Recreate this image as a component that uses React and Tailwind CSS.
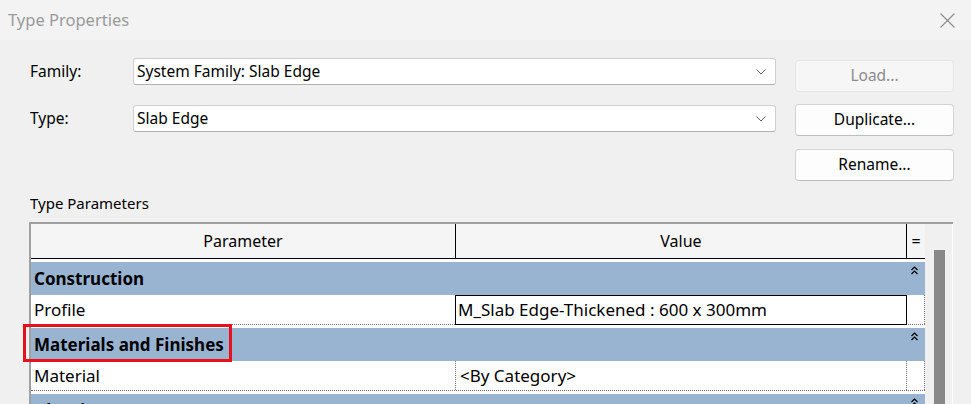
import React from "react";

const font = "font-['Noto_Sans',sans-serif]";

const Chevron = () => (
  <svg width="10" height="6" viewBox="0 0 10 6" className="text-[#606060]">
    <path d="M0.5 0.5 L5 5 L9.5 0.5" fill="none" stroke="currentColor" strokeWidth="1" />
  </svg>
);

const Collapse = () => (
  <svg width="7" height="9" viewBox="0 0 7 9">
    <path d="M0.5 4 L3.5 1 L6.5 4 M0.5 8 L3.5 5 L6.5 8" fill="none" stroke="#000" strokeWidth="1.2" />
  </svg>
);

const Combo = ({ value }) => (
  <div className="w-[643px] h-[27px] bg-white border border-[#cfcfcf] border-b-[#b0b0b0] rounded-[3px] flex items-center justify-between pl-[3px] pr-[9px]">
    <span className="text-[15.5px] text-black">{value}</span>
    <Chevron />
  </div>
);

const Button = ({ children, disabled }) => (
  <button
    className={
      disabled
        ? "w-[159px] h-[32px] rounded-[4px] border border-[#e5e5e5] bg-[#f6f6f6] text-[15.5px] text-[#8a8a8a]"
        : "w-[159px] h-[32px] rounded-[4px] border border-[#d3d3d3] border-b-[#bdbdbd] bg-[#fdfdfd] text-[15.5px] text-black"
    }
  >
    {children}
  </button>
);

const Group = ({ title }) => (
  <div className="bg-white pt-[3px]">
    <div className="h-[33px] bg-[#99b4d1] flex items-center justify-between pl-[3px] pr-[7px]">
      <span className="font-bold text-[17px] text-black">{title}</span>
      <div className="self-start mt-[4px]">
        <Collapse />
      </div>
    </div>
  </div>
);

export default function App() {
  return (
    <div className={`relative w-[971px] h-[404px] overflow-hidden bg-[#f0f0f0] ${font}`}>
      {/* title bar */}
      <div className="h-[40px] bg-[#f3f3f3] flex items-center justify-between pl-[8px] pr-[16px]">
        <span className="text-[16.5px] text-[#9a9a9a]">Type Properties</span>
        <svg width="15" height="15" viewBox="0 0 15 15">
          <path d="M0.5 0.5 L14.5 14.5 M14.5 0.5 L0.5 14.5" stroke="#8a8a8a" strokeWidth="1.1" />
        </svg>
      </div>

      {/* family / type selectors and buttons */}
      <div className="flex h-[141px]">
        <div className="flex flex-col pt-[18px] pl-[30px] gap-[20px]">
          <div className="flex items-center">
            <span className="w-[103px] text-[15.5px] text-black">Family:</span>
            <Combo value="System Family: Slab Edge" />
          </div>
          <div className="flex items-center">
            <span className="w-[103px] text-[15.5px] text-black">Type:</span>
            <Combo value="Slab Edge" />
          </div>
        </div>
        <div className="flex flex-col pt-[20px] ml-[19px]">
          <Button disabled>Load...</Button>
          <div className="mt-[12px]">
            <Button>Duplicate...</Button>
          </div>
          <div className="mt-[13px]">
            <Button>Rename...</Button>
          </div>
        </div>
      </div>

      <div className="mt-[11px] h-[22px] pl-[30px] flex items-center text-[15px] text-black">Type Parameters</div>

      {/* parameter grid */}
      <div className="mt-[8px] ml-[29px] w-[924px] flex border-t-2 border-l-2 border-[#a0a0a0] text-[17px] text-black">
        <div className="w-[894px] flex flex-col">
          <div className="h-[35px] flex bg-[#f5f5f5] border-b border-black text-[16px]">
            <div className="w-[425px] border-r border-black flex items-center justify-center">Parameter</div>
            <div className="w-[451px] border-r border-black flex items-center justify-center">Value</div>
            <div className="w-[18px] flex items-center justify-center">=</div>
          </div>

          <Group title="Construction" />
          <div className="h-[30px] flex bg-white border-b border-dotted border-[#707070]">
            <div className="w-[424px] pl-[3px] flex items-center">Profile</div>
            <div className="w-[452px] h-[30px] border border-black pl-[2px] flex items-center">
              M_Slab Edge-Thickened : 600 x 300mm
            </div>
            <div className="w-[18px] border-r border-dotted border-[#707070]" />
          </div>

          <Group title="Materials and Finishes" />
          <div className="h-[30px] flex bg-white border-b border-dotted border-[#707070]">
            <div className="w-[425px] pl-[3px] flex items-center border-r border-dotted border-[#707070]">Material</div>
            <div className="w-[451px] pl-[4px] flex items-center border-r border-dotted border-[#707070]">
              &lt;By Category&gt;
            </div>
            <div className="w-[18px] border-r border-dotted border-[#707070]" />
          </div>

          <Group title="Identity Data" />
        </div>

        {/* vertical scrollbar */}
        <div className="w-[28px] bg-[#f0f0f0] border-r border-[#fbfbfb] pl-[9px] pt-[26px]">
          <div className="w-[11px] h-[200px] bg-[#888888]" />
        </div>
      </div>

      {/* highlight box */}
      <div className="absolute left-[23px] top-[324px] w-[209px] h-[38px] border-[3px] border-[#e8101a]" />
    </div>
  );
}
